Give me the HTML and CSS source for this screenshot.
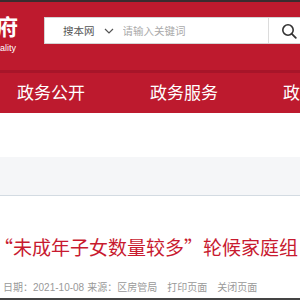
FILE: index.html
```html
<!DOCTYPE html>
<html lang="zh-CN">
<head>
    <meta charset="UTF-8">
    <meta name="viewport" content="width=device-width, initial-scale=1.0">
    <title>“未成年子女数量较多”轮候家庭组</title>
    <link rel="stylesheet" href="styles.css">
</head>
<body>
    <div class="topbar"></div>
    <header class="header">
        <div class="logo">
            <div class="logo-cn">成都市人民政府</div>
            <div class="logo-en">The People's Government of Chengdu Municipality</div>
        </div>
        <form class="search">
            <div class="scope">
                <span>搜本网</span>
                <svg class="chevron" width="10" height="6" viewBox="0 0 10 6">
                    <path d="M1 1 L5 5 L9 1" fill="none" stroke="#555" stroke-width="1.2"/>
                </svg>
            </div>
            <input type="text" class="keyword" placeholder="请输入关键词">
            <button type="button" class="search-btn">
                <svg width="16" height="16" viewBox="0 0 16 16">
                    <circle cx="7" cy="7" r="5.2" fill="none" stroke="#333" stroke-width="1.6"/>
                    <path d="M10.8 10.8 L14.8 14.8" stroke="#333" stroke-width="1.8" stroke-linecap="round"/>
                </svg>
            </button>
        </form>
    </header>

    <nav class="nav">
        <a href="#">政务公开</a>
        <a href="#">政务服务</a>
        <a href="#">政民互动</a>
    </nav>

    <div class="crumb-band"></div>

    <div class="article">
        <h1 class="title">“未成年子女数量较多”轮候家庭组</h1>
        <div class="meta">
            <span>日期：2021-10-08</span>
            <span>来源：区房管局</span>
            <a href="#" class="meta-link">打印页面</a>
            <a href="#" class="meta-link">关闭页面</a>
        </div>
    </div>
</body>
</html>
```

FILE: styles.css
```css
* {
    margin: 0;
    padding: 0;
    box-sizing: border-box;
}

body {
    font-family: "Liberation Sans", "Noto Sans CJK SC", sans-serif;
    background: white;
    overflow: hidden;
}

.topbar {
    height: 2px;
    background: #3a2c2f;
}

.header {
    background: #be1a2e;
    height: 68px;
    display: flex;
    align-items: flex-start;
    white-space: nowrap;
}

.logo {
    width: 18px;
    overflow: hidden;
    display: flex;
    flex-direction: column;
    align-items: flex-end;
    padding-top: 13px;
    color: white;
    flex-shrink: 0;
}

.logo-cn {
    font-size: 22px;
    line-height: 26px;
    font-weight: bold;
}

.logo-en {
    font-size: 9px;
    line-height: 11px;
    margin-top: 2px;
    margin-right: 2px;
}

.search {
    margin-left: 26px;
    margin-top: 15px;
    width: 266px;
    height: 27px;
    flex-shrink: 0;
    display: flex;
    background: white;
    border: 1px solid #d4d4d4;
}

.scope {
    display: flex;
    align-items: center;
    padding-left: 18px;
    font-size: 10.5px;
    color: #555;
}

.chevron {
    margin-left: 9px;
}

.keyword {
    flex: 1;
    min-width: 0;
    border: none;
    border-right: 1px solid #dcdcdc;
    padding-left: 9px;
    font-family: inherit;
    font-size: 10.5px;
    outline: none;
}

.keyword::placeholder {
    color: #aaa;
}

.search-btn {
    width: 40px;
    border: none;
    background: white;
    display: flex;
    align-items: center;
    justify-content: center;
}

.nav {
    background: #bd1a2e;
    border-top: 3px solid #a71529;
    height: 43px;
    display: flex;
    gap: 65px;
    padding-left: 17px;
    padding-top: 2px;
    white-space: nowrap;
}

.nav a {
    color: white;
    text-decoration: none;
    font-size: 17px;
    line-height: 38px;
}

.crumb-band {
    margin-top: 44px;
    height: 39px;
    background: #f5f6f8;
    border-bottom: 1px solid #d3dbe2;
}

.article {
    padding: 37px 3px 0;
    border-bottom: 2px solid #444;
    white-space: nowrap;
}

.title {
    font-family: "Noto Sans CJK SC", sans-serif;
    font-size: 19px;
    line-height: 28px;
    font-weight: normal;
    color: #c81a2f;
    margin-left: -9px;
}

.meta {
    margin-top: 17px;
    font-size: 10px;
    line-height: 20px;
    color: #999;
    display: flex;
    gap: 10px;
}

.meta span + span {
    margin-left: -7px;
}

.meta-link {
    color: #999;
    text-decoration: none;
}
```
